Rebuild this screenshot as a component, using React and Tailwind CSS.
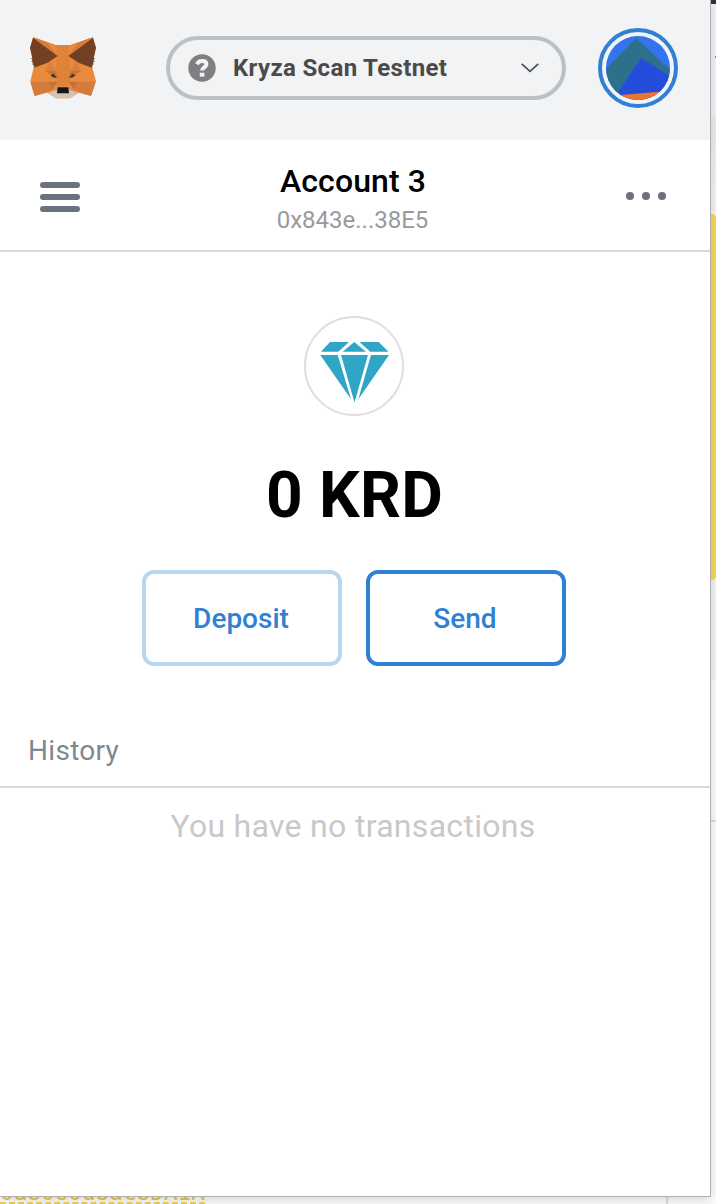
import React from "react";

function Fox() {
  return (
    <svg className="block h-[64px] w-[68px]" viewBox="-3 12 204 192">
      <path d="M10 16 75 39H123L188 16 198 47 190 85 187 107 198 147 183 192 146 182 120 199H78L52 182 14 192 1 147 11 107 8 85 0 47Z" fill="#e88b3c" />
      <path d="M10 16 75 39 83 72ZM188 16 123 39 115 72Z" fill="#d97a36" />
      <path d="M52 31 75 39 83 72ZM146 31 123 39 115 72Z" fill="#e88b3c" />
      <path d="M82 39H116L117 72 122 116 116 170H82L76 116 81 72Z" fill="#e18337" />
      <path d="M9 17 0 47 7 77 3 79 8 84 4 88 10 93 6 96 12 100 12 107 53 92 83 72ZM189 17 198 47 191 77 195 79 190 84 194 88 188 93 192 96 186 100 186 107 145 92 115 72Z" fill="#724124" />
      <path d="M60 86 45 117 76 117ZM138 86 153 117 122 117Z" fill="#dc7e39" />
      <path d="M45 117H76L84 140ZM153 117H122L114 140Z" fill="#ca7138" />
      <path d="M1 149H53L67 174 14 192ZM197 149H145L131 174 183 192Z" fill="#d57b3b" />
      <path d="M53 149H84L67 174ZM145 149H114L131 174Z" fill="#c87036" />
      <path d="M67 174 84 149 82 172 58 184ZM131 174 114 149 116 172 140 184Z" fill="#e88b3c" />
      <path d="M54 182 80 174H118L144 182 120 199H78Z" fill="#d2c3b7" />
      <path d="M61 129 72 125 80 138 68 136ZM137 129 126 125 118 138 130 136Z" fill="#303c4b" />
      <path d="M83 164H115L119 184H79Z" fill="#bdb1a8" />
      <path d="M83 166H115L117 184H81Z" fill="#171717" />
    </svg>
  );
}

function NetworkSelector() {
  return (
    <button className="flex h-16 w-[400px] items-center rounded-full border-4 border-[#bbc0c5] pr-[23px] pl-[18px]">
      <svg className="mr-[17px] block size-7" viewBox="0 0 28 28">
        <circle cx="14" cy="14" r="13.7" fill="#7d7f81" />
        <path d="M8.9 10.2C10.2 7.8 12 7 14 7c2.7 0 4.4 1.3 4.4 3.3 0 3.1-4.3 3-4.3 6.3" fill="none" stroke="#f2f3f5" strokeWidth="4" />
        <path d="M11.8 18.7h4.6v4h-4.6z" fill="#f2f3f5" />
      </svg>
      <span className="text-[24px] leading-7 font-bold tracking-[0.35px] whitespace-nowrap text-[#4a4a4a]">Kryza Scan Testnet</span>
      <svg className="ml-auto block h-[10px] w-[18px]" viewBox="0 0 18 10" fill="none">
        <path d="M.7.8 9 8.4 17.3.8" stroke="#4d5156" strokeWidth="1.8" />
      </svg>
    </button>
  );
}

function Avatar() {
  return (
    <div className="flex size-20 items-center justify-center rounded-full border-4 border-[#3080d4]">
      <svg className="block size-16 rounded-full" viewBox="0 0 64 64">
        <path d="M0 0h64v64H0z" fill="#3274ed" />
        <path d="M0 33 30 2 64 34V64H0Z" fill="#2d708c" />
        <path d="M35 22 64 40V55L16 60 12 56Z" fill="#254ddb" />
        <path d="M15 59 56 55.5V64H15Z" fill="#ec752d" />
      </svg>
    </div>
  );
}

function Popup() {
  return (
    <main className="relative z-10 h-[1196px] w-[710px] shrink-0 bg-white shadow-[0_0_0_1px_#b0b0b3,0_3px_12px_rgba(0,0,0,0.18)]">
      <header className="flex h-[140px] items-start bg-[#f2f3f5]">
        <div className="mt-9 ml-[29px] w-[137px]"><Fox /></div>
        <div className="mt-9"><NetworkSelector /></div>
        <div className="mt-7 ml-8"><Avatar /></div>
      </header>
      <section className="flex h-28 items-start justify-between border-b-2 border-[#d8d9dd] pr-11 pl-10">
        <div className="mt-[42px] flex w-10 flex-col gap-[6px]">
          <i className="h-[6px] rounded-[3px] bg-[#6a737d]" />
          <i className="h-[6px] rounded-[3px] bg-[#6a737d]" />
          <i className="h-[6px] rounded-[3px] bg-[#6a737d]" />
        </div>
        <div className="pt-[22px] text-center">
          <h1 className="text-[32px] leading-[38px] font-medium tracking-[0.1px] text-black">Account 3</h1>
          <p className="mt-[6px] pr-[1px] text-[24px] leading-7 text-[#989a9b]">0x843e...38E5</p>
        </div>
        <div className="mt-[52px] flex gap-2">
          <i className="size-2 rounded-full bg-[#6a737d]" />
          <i className="size-2 rounded-full bg-[#6a737d]" />
          <i className="size-2 rounded-full bg-[#6a737d]" />
        </div>
      </section>
      <section className="flex h-[414px] flex-col items-center pt-16 pr-[2px]">
        <div className="flex size-[100px] items-center justify-center rounded-full border-2 border-[#dedede]">
          <svg className="mt-[12px] block h-[62px] w-[70px]" viewBox="0 0 70 62" fill="#2fa6c5">
            <path d="M11 1H30L19.3 10.7H2ZM40.5 1H59.7L69.5 10.7H51.3ZM35.3 1 47 10.7H23.7ZM1.3 14H18.7L32 58.3ZM22 14H49L35.5 61.5ZM52 14H70L39.3 58.3Z" />
          </svg>
        </div>
        <div className="mt-[42px] pl-[1px] text-[64px] leading-[76px] font-bold tracking-[0.2px] text-black">0 KRD</div>
        <div className="mt-9 flex gap-6 text-[28px] font-medium text-[#3080d4]">
          <button className="h-24 w-[200px] rounded-xl border-4 border-[#b7d6ef] pt-[2px] pr-[2px]">Deposit</button>
          <button className="h-24 w-[200px] rounded-xl border-4 border-[#3080d4] pt-[2px] pr-[2px]">Send</button>
        </div>
      </section>
      <section className="pt-16">
        <h2 className="h-[58px] border-b-2 border-[#d8d9dd] pt-[5px] pl-7 text-[28px] leading-8 tracking-[0.3px] text-[#7f8890]">History</h2>
        <p className="pt-[19px] pr-[4px] text-center text-[32px] leading-[38px] tracking-[0.3px] text-[#c8c8c8]">You have no transactions</p>
      </section>
    </main>
  );
}

export default function App() {
  return (
    <div className="h-[1204px] w-[716px] overflow-hidden bg-[#fcfcfd] font-[Roboto,sans-serif]">
      <div className="flex h-[1196px]">
        <Popup />
        <aside className="flex w-[6px] flex-col bg-[#fcfcfd]">
          <div className="h-1 bg-[#333438]" />
          <div className="flex h-[114px] flex-col items-end bg-[#f2f3f8] pt-[52px]">
            <div className="h-[2px] w-[1px] bg-[#8b8c91]" />
          </div>
          <div className="h-24 bg-linear-to-b from-[#ececef] to-[#f5f5fa]" />
          <div className="h-[366px] rounded-tr-[4px] rounded-br-[4px] bg-[#f6da58]" />
          <div className="h-[100px] bg-[#f2f2f8]" />
          <div className="mt-[140px] h-[2px] bg-[#dcdce2]" />
        </aside>
      </div>
      <footer className="-mt-6 flex h-[33px]">
        <div className="h-[33px] w-[205px] border-b-[3px] border-dashed border-[#f1d551] pt-[5px]">
          <span className="block text-[22.7px] leading-[30px] whitespace-nowrap text-[#e5c849] [font-family:'DejaVu_Sans_Mono',monospace]">0a8060d8ac8DA1A</span>
        </div>
        <div className="ml-[461px] h-8 w-[2px] bg-[#dcdce2]" />
      </footer>
    </div>
  );
}
